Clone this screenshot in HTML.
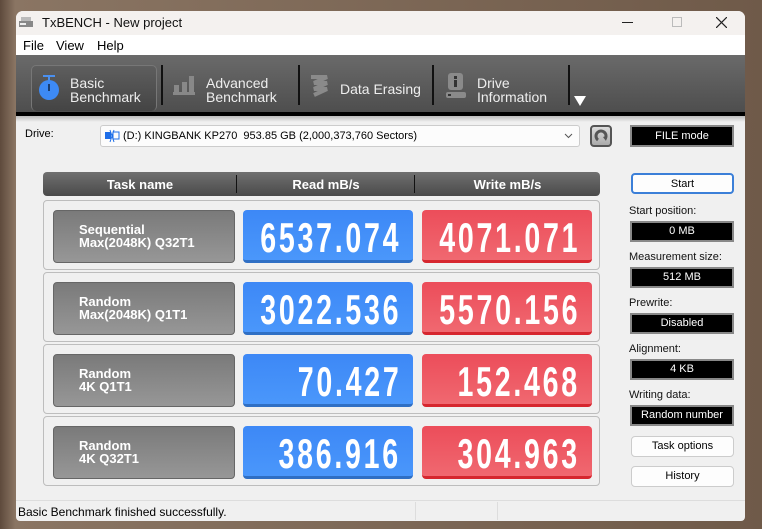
<!DOCTYPE html>
<html><head><meta charset="utf-8"><style>
*{margin:0;padding:0;box-sizing:border-box}
body{width:762px;height:529px;overflow:hidden;background:linear-gradient(90deg,#5e4a3c 0,#8a7563 2%,#6f5a49 100%);font-family:"Liberation Sans",sans-serif;position:relative}
.a{position:absolute}
#win{left:16px;top:11px;width:729px;height:510px;background:#f0f0f0;border-radius:7px 7px 4px 4px;overflow:hidden}
.tb{left:0;top:0;width:729px;height:24px;background:#f4f1ef;font-size:13px;color:#111}
.menu{top:24px;left:0;width:729px;height:20px;background:#fff;font-size:13px}
.tool{top:44px;left:0;width:729px;height:57px;background:linear-gradient(#6a6a6a,#4e4e4e)}
.tt{color:#eee;font-size:14px;line-height:14px}
.sep{width:2px;height:40px;background:#111;top:10px}
.hdr{left:27px;top:161px;width:557px;height:24px;border-radius:4px;background:linear-gradient(#707070,#4a4a4a);color:#fff;font:bold 13px "Liberation Sans",sans-serif}
.hdr span{position:absolute;top:5px;text-align:center}
.box{left:27px;width:557px;height:70px;border:1px solid #bdbdbd;border-radius:4px}
.tn{left:9px;top:9px;width:182px;height:53px;border-radius:4px;background:linear-gradient(#7a7a7a,#979797);border:1px solid #666;color:#fff;font:bold 13px "Liberation Sans",sans-serif;padding:12px 0 0 25px;line-height:13px}
.rd,.wr{top:9px;width:170px;height:53px;border-radius:4px;color:#fff;line-height:53px;overflow:hidden}
.rd span,.wr span{position:absolute;right:12px;top:4px;font:bold 42px "Liberation Sans",sans-serif;letter-spacing:4px;transform:scaleX(0.68);transform-origin:right center;white-space:nowrap}
.rd{left:199px;background:linear-gradient(#3d88f6,#4a97fb);border-bottom:3px solid #2f6fc4}
.wr{left:378px;background:linear-gradient(#ec4d5a,#f06870);border-bottom:3px solid #d6262e}
.lb{font-size:11px;color:#111;left:613px}
.bk{left:614px;width:104px;height:21px;background:#000;border:2px solid #888;color:#fff;font-size:11px;text-align:center;line-height:17px}
.bt{left:615px;width:103px;height:21px;background:#fdfdfd;border:1px solid #ccc;border-radius:4px;font-size:11px;text-align:center;line-height:19px}
</style></head><body>
<div id="win" class="a">
<div class="a tb"><svg class="a" style="left:2px;top:4px" width="16" height="16"><rect x="3" y="2" width="10" height="4" fill="#bbb"/><rect x="1" y="6" width="14" height="6" fill="#888"/><rect x="2" y="8" width="6" height="2" fill="#eee"/></svg><span class="a" style="left:26px;top:4px">TxBENCH - New project</span>
<div class="a" style="left:606px;top:11px;width:11px;height:1px;background:#222"></div>
<div class="a" style="left:656px;top:6px;width:10px;height:10px;border:1px solid #bbb"></div>
<svg class="a" style="left:700px;top:6px" width="11" height="11"><path d="M0 0L11 11M11 0L0 11" stroke="#222" stroke-width="1.2"/></svg></div>
<div class="a menu"><span class="a" style="left:7px;top:3px">File</span><span class="a" style="left:40px;top:3px">View</span><span class="a" style="left:81px;top:3px">Help</span></div>
<div class="a tool">
<div class="a" style="left:15px;top:10px;width:126px;height:46px;border-radius:5px;background:linear-gradient(#5e5e5e,#444);border:1px solid #777;border-bottom:none"></div>
<svg class="a" style="left:22px;top:18px" width="22" height="28"><rect x="5" y="2" width="12" height="2" fill="#4a90f0"/><rect x="10" y="3" width="2" height="5" fill="#4a90f0"/><circle cx="11" cy="17" r="10" fill="#3d8af5"/><rect x="10" y="11" width="2" height="7" fill="#1a3d70"/></svg>
<div class="a tt" style="left:54px;top:21px">Basic<br>Benchmark</div>
<div class="a sep" style="left:145px"></div>
<svg class="a" style="left:156px;top:20px" width="24" height="24"><rect x="1" y="17" width="22" height="3" fill="#888"/><rect x="2" y="10" width="5" height="8" fill="#888"/><rect x="10" y="7" width="5" height="11" fill="#888"/><rect x="17" y="1" width="5" height="17" fill="#888"/></svg>
<div class="a tt" style="left:190px;top:21px">Advanced<br>Benchmark</div>
<div class="a sep" style="left:282px"></div>
<svg class="a" style="left:292px;top:19px" width="22" height="24"><path d="M3 3h16l-13 6h13l-13 6h13l-13 6" stroke="#8a8a8a" stroke-width="4" fill="none"/></svg>
<div class="a tt" style="left:324px;top:27px">Data Erasing</div>
<div class="a sep" style="left:416px"></div>
<svg class="a" style="left:429px;top:18px" width="22" height="28"><rect x="3" y="0" width="15" height="17" rx="3" fill="#8a8a8a"/><rect x="9" y="3" width="3" height="3" fill="#333"/><rect x="9" y="7" width="3" height="7" fill="#333"/><rect x="1" y="19" width="20" height="6" rx="2" fill="#8a8a8a"/><rect x="3" y="21" width="3" height="2" fill="#333"/></svg>
<div class="a tt" style="left:461px;top:21px">Drive<br>Information</div>
<div class="a sep" style="left:552px"></div>
<div class="a" style="left:558px;top:41px;border-left:6px solid transparent;border-right:6px solid transparent;border-top:10px solid #fff"></div>
</div>
<div class="a" style="top:101px;left:0;width:729px;height:4px;background:#000"></div>
<div class="a" style="top:105px;left:0;width:729px;height:6px;background:linear-gradient(#bbb,#f0f0f0)"></div>
<span class="a" style="left:9px;top:117px;font-size:11px">Drive:</span>
<div class="a" style="left:84px;top:114px;width:480px;height:22px;background:#fcfcfc;border:1px solid #ccc;border-radius:3px;font-size:11px;line-height:20px;padding-left:22px">(D:) KINGBANK KP270&nbsp; 953.85 GB (2,000,373,760 Sectors)
<svg class="a" style="left:3px;top:3px" width="16" height="14"><rect x="1" y="3" width="6" height="7" fill="#1e6ee8"/><rect x="9" y="3" width="6" height="7" fill="none" stroke="#1e6ee8"/><path d="M6 1l4 12M10 1l-4 12" stroke="#1e6ee8"/></svg>
<svg class="a" style="right:6px;top:7px" width="9" height="6"><path d="M1 1l3.5 3.5L8 1" stroke="#555" fill="none"/></svg></div>
<div class="a" style="left:574px;top:114px;width:22px;height:22px;border:2px solid #555;border-radius:4px;background:linear-gradient(#ddd,#aaa)"><svg width="18" height="18"><path d="M13 12A5 5 0 1 0 6 13" stroke="#555" stroke-width="3" fill="none"/><path d="M11 10l3 4 1-5z" fill="#555"/></svg></div>
<div class="a bk" style="top:114px;height:22px;font-size:11px;line-height:18px">FILE mode</div>
<div class="a hdr"><span style="left:0;width:194px">Task name</span><div class="a" style="left:193px;top:3px;width:1px;height:18px;background:#111"></div><span style="left:194px;width:178px">Read mB/s</span><div class="a" style="left:371px;top:3px;width:1px;height:18px;background:#111"></div><span style="left:372px;width:185px">Write mB/s</span></div>

<div class="a box" style="top:189px"><div class="a tn">Sequential<br>Max(2048K) Q32T1</div><div class="a rd"><span>6537.074</span></div><div class="a wr"><span>4071.071</span></div></div>
<div class="a box" style="top:261px"><div class="a tn">Random<br>Max(2048K) Q1T1</div><div class="a rd"><span>3022.536</span></div><div class="a wr"><span>5570.156</span></div></div>
<div class="a box" style="top:333px"><div class="a tn">Random<br>4K Q1T1</div><div class="a rd"><span>70.427</span></div><div class="a wr"><span>152.468</span></div></div>
<div class="a box" style="top:405px"><div class="a tn">Random<br>4K Q32T1</div><div class="a rd"><span>386.916</span></div><div class="a wr"><span>304.963</span></div></div>

<div class="a bt" style="top:162px;border:2px solid #3b7fd8;font-size:11px">Start</div>
<span class="a lb" style="top:194px">Start position:</span><div class="a bk" style="top:210px">0 MB</div>
<span class="a lb" style="top:240px">Measurement size:</span><div class="a bk" style="top:256px">512 MB</div>
<span class="a lb" style="top:286px">Prewrite:</span><div class="a bk" style="top:302px">Disabled</div>
<span class="a lb" style="top:332px">Alignment:</span><div class="a bk" style="top:348px">4 KB</div>
<span class="a lb" style="top:378px">Writing data:</span><div class="a bk" style="top:394px">Random number</div>
<div class="a bt" style="top:425px">Task options</div>
<div class="a bt" style="top:455px">History</div>
<div class="a" style="top:489px;left:0;width:729px;height:1px;background:#ddd"></div>
<span class="a" style="left:2px;top:494px;font-size:12px">Basic Benchmark finished successfully.</span>
<div class="a" style="left:399px;top:491px;width:1px;height:18px;background:#ddd"></div>
<div class="a" style="left:481px;top:491px;width:1px;height:18px;background:#ddd"></div>
</div>
</body></html>
